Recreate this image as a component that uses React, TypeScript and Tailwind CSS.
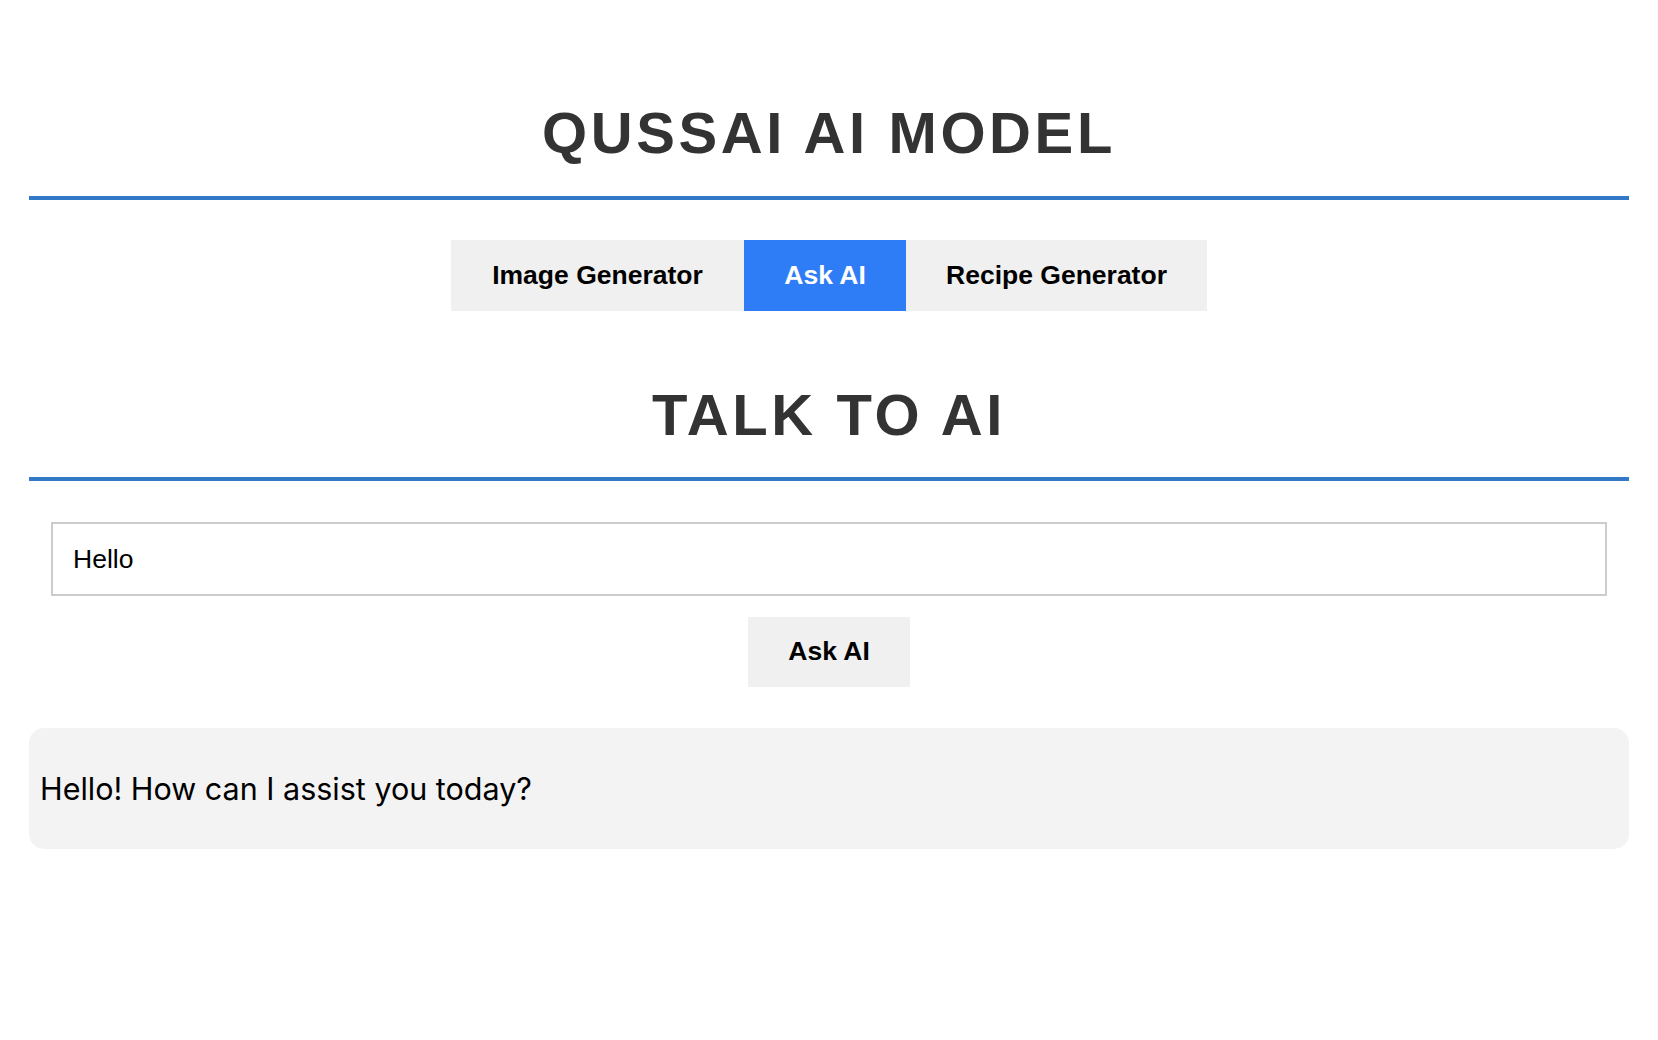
import React from "react";

export default function App() {
  const font = { fontFamily: '"Liberation Sans", Arial, Helvetica, sans-serif' };
  return (
    <div className="min-h-screen bg-white" style={font}>
      <div className="mx-auto w-[1600px] pt-[98px]">
        <h1 className="text-center text-[58px] font-bold leading-[69px] tracking-[3.6px] text-[#333333] pb-[29px] border-b-4 border-[#3178c6]">
          QUSSAI AI MODEL
        </h1>
        <div className="mt-[40px] flex justify-center">
          <button className="h-[71px] w-[293px] bg-[#f0f0f0] text-[26.5px] font-bold text-black">
            Image Generator
          </button>
          <button className="h-[71px] w-[162px] bg-[#2f7df6] text-[26.5px] font-bold text-white">
            Ask AI
          </button>
          <button className="h-[71px] w-[301px] bg-[#f0f0f0] text-[26.5px] font-bold text-black">
            Recipe Generator
          </button>
        </div>
        <h2 className="mt-[69px] text-center text-[58px] font-bold leading-[69px] tracking-[3.6px] text-[#333333] pb-[28px] border-b-4 border-[#3178c6]">
          TALK TO AI
        </h2>
        <div className="mt-[41px] flex justify-center">
          <input
            defaultValue="Hello"
            className="w-[1556px] h-[74px] border-2 border-[#cccccc] px-[20px] text-[26.5px] text-black outline-none"
            style={font}
          />
        </div>
        <div className="mt-[21px] flex justify-center">
          <button className="h-[70px] w-[162px] bg-[#f0f0f0] text-[26.5px] font-bold text-black">
            Ask AI
          </button>
        </div>
        <div className="mt-[41px] h-[121px] rounded-[15px] bg-[#f3f3f3] flex items-center px-[11px]">
          <p className="text-[30.5px] text-black" style={{ fontFamily: 'Inter, "Noto Sans", sans-serif' }}>
            Hello! How can I assist you today?
          </p>
        </div>
      </div>
    </div>
  );
}
